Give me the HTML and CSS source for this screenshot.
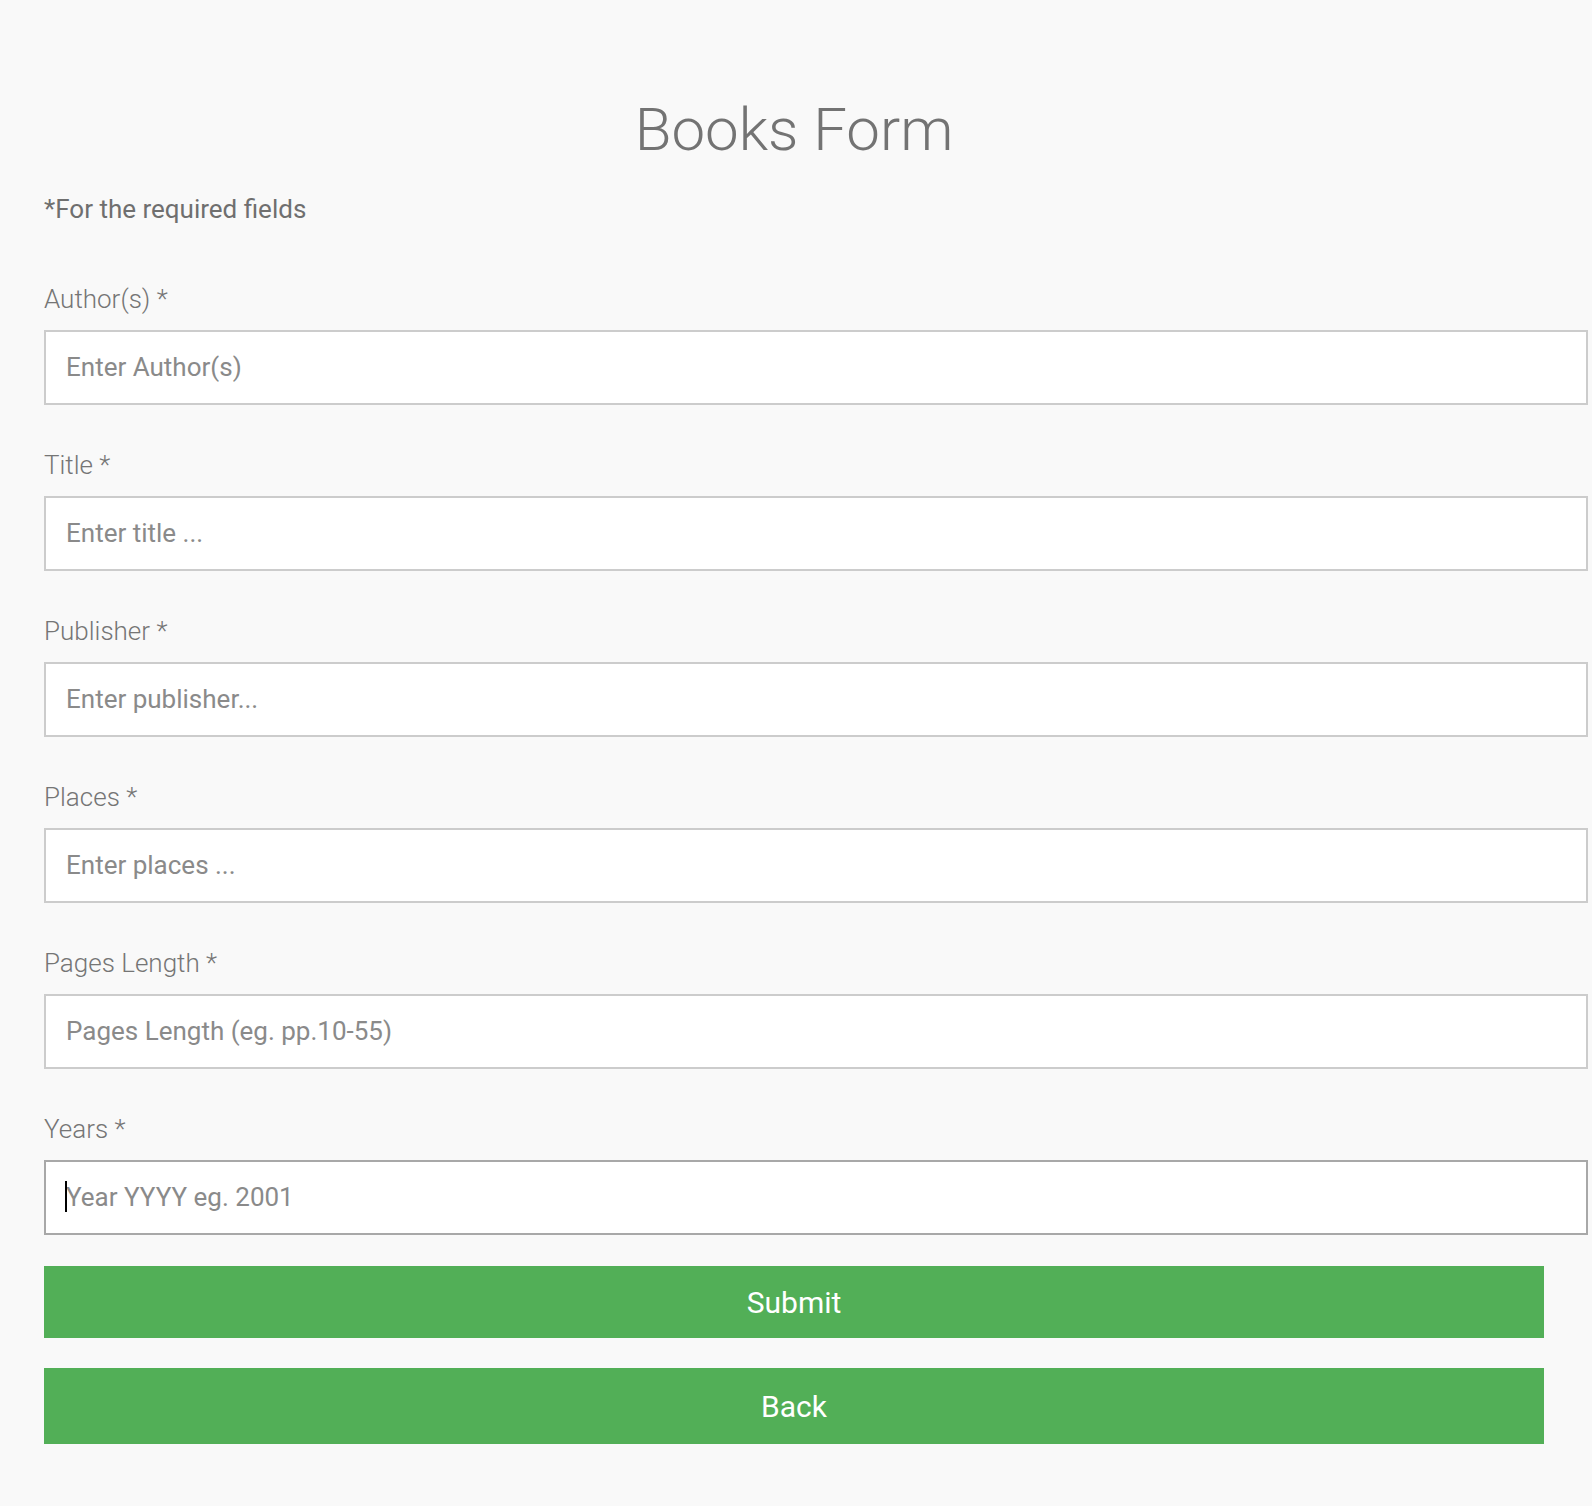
FILE: index.html
```html
<!DOCTYPE html>
<html>
<head>
<meta charset="utf-8">
<link rel="stylesheet" href="styles.css">
</head>
<body>
<div class="page">
  <h1 class="title">Books Form</h1>
  <p class="note">*For the required fields</p>
  <form class="form">
    <div class="field">
      <label class="label">Author(s) *</label>
      <input class="input" type="text" placeholder="Enter Author(s)">
    </div>
    <div class="field">
      <label class="label">Title *</label>
      <input class="input" type="text" placeholder="Enter title ...">
    </div>
    <div class="field">
      <label class="label">Publisher *</label>
      <input class="input" type="text" placeholder="Enter publisher...">
    </div>
    <div class="field">
      <label class="label">Places *</label>
      <input class="input" type="text" placeholder="Enter places ...">
    </div>
    <div class="field">
      <label class="label">Pages Length *</label>
      <input class="input" type="text" placeholder="Pages Length (eg. pp.10-55)">
    </div>
    <div class="field">
      <label class="label">Years *</label>
      <div class="input-wrap">
        <input class="input input-focus" type="text" placeholder="Year YYYY eg. 2001">
        <span class="caret"></span>
      </div>
    </div>
    <button class="btn btn-submit" type="button">Submit</button>
    <button class="btn btn-back" type="button">Back</button>
  </form>
</div>
</body>
</html>
```

FILE: styles.css
```css
html, body {
  margin: 0;
  padding: 0;
  background: #f9f9f9;
}
body {
  font-family: Roboto, "Liberation Sans", sans-serif;
  color: #757575;
}
.page {
  width: 1500px;
  padding: 92px 0 40px 44px;
}
.title {
  margin: 0;
  text-align: center;
  font-weight: 300;
  font-size: 60px;
  line-height: 76px;
  color: #737373;
}
.note {
  margin: 26px 0 0;
  font-size: 26px;
  line-height: 30px;
  color: #6f6f6f;
}
.form {
  display: flex;
  flex-direction: column;
  margin-top: 60px;
}
.field {
  display: flex;
  flex-direction: column;
  margin-bottom: 45px;
}
.field:last-of-type {
  margin-bottom: 31px;
}
.label {
  font-size: 26px;
  font-weight: 300;
  line-height: 30px;
  margin-bottom: 16px;
  color: #757575;
}
.input-wrap {
  position: relative;
}
.input {
  display: block;
  width: 100%;
  height: 69px;
  padding: 0 20px 2px;
  border: 2px solid #cccccc;
  background: #ffffff;
  font-family: Roboto, "Liberation Sans", sans-serif;
  font-size: 26px;
  color: #555;
  outline: none;
  margin: 0;
}
.input::placeholder {
  color: #8a8a8a;
}
.input-focus {
  border-color: #a8a8a8;
}
.caret {
  position: absolute;
  left: 21px;
  top: 21px;
  width: 2px;
  height: 31px;
  background: #000;
}
.btn {
  display: block;
  width: 1500px;
  border: none;
  background: #52af57;
  color: #ffffff;
  font-family: Roboto, "Liberation Sans", sans-serif;
  font-size: 30px;
  padding: 0;
  margin: 0;
  cursor: pointer;
}
.btn-submit {
  height: 72px;
}
.btn-back {
  height: 76px;
  margin-top: 30px;
}
```
